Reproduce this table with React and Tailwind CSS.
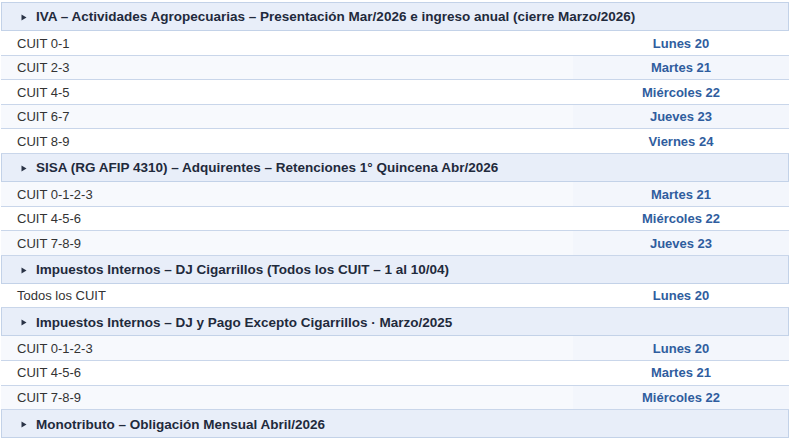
import React from "react";

const sections = [
  {
    title: "IVA – Actividades Agropecuarias – Presentación Mar/2026 e ingreso anual (cierre Marzo/2026)",
    rows: [
      ["CUIT 0-1", "Lunes 20"],
      ["CUIT 2-3", "Martes 21"],
      ["CUIT 4-5", "Miércoles 22"],
      ["CUIT 6-7", "Jueves 23"],
      ["CUIT 8-9", "Viernes 24"],
    ],
  },
  {
    title: "SISA (RG AFIP 4310) – Adquirentes – Retenciones 1° Quincena Abr/2026",
    rows: [
      ["CUIT 0-1-2-3", "Martes 21"],
      ["CUIT 4-5-6", "Miércoles 22"],
      ["CUIT 7-8-9", "Jueves 23"],
    ],
  },
  {
    title: "Impuestos Internos – DJ Cigarrillos (Todos los CUIT – 1 al 10/04)",
    rows: [["Todos los CUIT", "Lunes 20"]],
  },
  {
    title: "Impuestos Internos – DJ y Pago Excepto Cigarrillos · Marzo/2025",
    rows: [
      ["CUIT 0-1-2-3", "Lunes 20"],
      ["CUIT 4-5-6", "Martes 21"],
      ["CUIT 7-8-9", "Miércoles 22"],
    ],
  },
  {
    title: "Monotributo – Obligación Mensual Abril/2026",
    rows: [],
  },
];

function Header({ title, first }) {
  return (
    <div
      className={`flex items-center border-x border-b border-[#c3d2e8] bg-[#e8eef9] pl-[19px] pt-[2px] text-[13.5px] font-bold text-[#1f2a3c] ${first ? "h-[29px] border-t" : "h-[28px]"}`}
    >
      <svg width="6" height="7" viewBox="0 0 6 7" className="mr-[9px] shrink-0">
        <path d="M0.5 0.5 L5.5 3.5 L0.5 6.5 Z" fill="#2a3346" />
      </svg>
      <span>{title}</span>
    </div>
  );
}

export default function App() {
  let idx = 0;
  return (
    <div
      className="w-[791px] bg-white pt-[2px] pl-[1px] pr-[2px]"
      style={{ fontFamily: '"Liberation Sans", Arial, sans-serif' }}
    >
      {sections.map((s, si) => (
        <div key={si}>
          <Header title={s.title} first={si === 0} />
          {s.rows.map((r, ri) => {
            idx += 1;
            const even = idx % 2 === 0;
            return (
              <div
                key={ri}
                className={`flex h-[24.6px] border-b border-[#c9d6ea] pt-[1px] text-[13px] ${even ? "bg-[#f7f9fd]" : "bg-white"}`}
              >
                <div className="flex flex-1 items-center pl-[16px] text-[#333333]">{r[0]}</div>
                <div
                  className={`-mt-[1px] flex w-[216px] items-center justify-center pt-[1px] font-bold text-[#2f5d9e] ${even ? "bg-[#f3f6fc]" : ""}`}
                >
                  {r[1]}
                </div>
              </div>
            );
          })}
        </div>
      ))}
    </div>
  );
}
